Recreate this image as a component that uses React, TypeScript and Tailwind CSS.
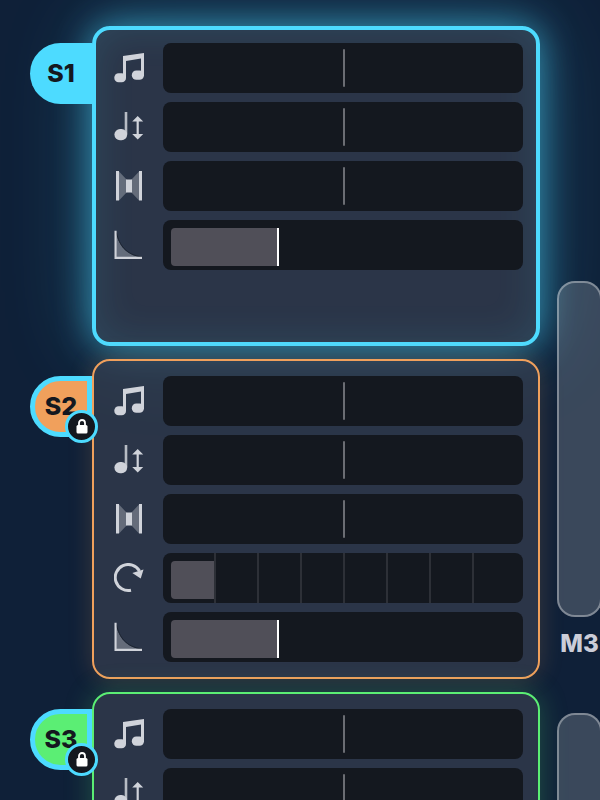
import { useState } from "react";
import type { ReactNode } from "react";

type ParamKind = "pitch" | "fine" | "width" | "repeat" | "decay";

interface Param {
  kind: ParamKind;
  value: number;
}

interface Slot {
  id: string;
  locked: boolean;
  card: string;
  tab: string;
  params: Param[];
}

const slots: Slot[] = [
  {
    id: "S1",
    locked: false,
    card: "border-4 border-[#4ddbff] px-[13px] pt-[13px] shadow-[0_0_36px_rgba(77,219,255,0.6),0_0_90px_rgba(77,219,255,0.24),inset_0_0_40px_rgba(77,219,255,0.12)]",
    tab: "bg-[#4ddbff]",
    params: [
      { kind: "pitch", value: 50 },
      { kind: "fine", value: 50 },
      { kind: "width", value: 50 },
      { kind: "decay", value: 31.5 },
    ],
  },
  {
    id: "S2",
    locked: true,
    card: "border-2 border-[#f0a05c] px-[15px] pt-[15px] shadow-[0_0_24px_rgba(240,160,92,0.2)]",
    tab: "border-[5px] border-[#4ddbff] bg-[#f0a05c]",
    params: [
      { kind: "pitch", value: 50 },
      { kind: "fine", value: 50 },
      { kind: "width", value: 50 },
      { kind: "repeat", value: 12.5 },
      { kind: "decay", value: 31.5 },
    ],
  },
  {
    id: "S3",
    locked: true,
    card: "border-2 border-[#5bee74] px-[15px] pt-[15px] shadow-[0_0_28px_rgba(91,238,116,0.25)]",
    tab: "border-[5px] border-[#4ddbff] bg-[#5bee74]",
    params: [
      { kind: "pitch", value: 50 },
      { kind: "fine", value: 50 },
      { kind: "width", value: 50 },
      { kind: "repeat", value: 12.5 },
      { kind: "decay", value: 31.5 },
    ],
  },
];

const labels: Record<ParamKind, string> = {
  pitch: "Pitch",
  fine: "Fine tune",
  width: "Width",
  repeat: "Repeat",
  decay: "Decay",
};

const icons: Record<ParamKind, ReactNode> = {
  pitch: (
    <>
      <path d="M9 3 30 0V5L12 8V25H9Z" fill="currentColor" />
      <path d="M27 3H30V22H27Z" fill="currentColor" />
      <rect x="0.3" y="20.2" width="11.7" height="9" rx="4.3" fill="currentColor" />
      <rect x="17.8" y="17.4" width="12.2" height="9.4" rx="4.5" fill="currentColor" />
    </>
  ),
  fine: (
    <>
      <path d="M10.7 0H13.3V22H10.7Z" fill="currentColor" opacity="0.85" />
      <rect x="0.4" y="17" width="12.8" height="11.2" rx="5.6" fill="currentColor" />
      <path
        d="M23.7 4 29.2 9.6H24.8V22H29.2L23.7 27.6 18.2 22H22.6V9.6H18.2Z"
        fill="currentColor"
      />
    </>
  ),
  width: (
    <>
      <path d="M5 0.5 12.5 8.5V21.5L5 29.5Z" fill="currentColor" opacity="0.35" />
      <path d="M25 0.5 17.5 8.5V21.5L25 29.5Z" fill="currentColor" opacity="0.35" />
      <rect x="2" y="0" width="3" height="29.5" fill="currentColor" />
      <rect x="25" y="0" width="3" height="29.5" fill="currentColor" />
      <rect x="12" y="8.5" width="6" height="13" fill="currentColor" />
    </>
  ),
  repeat: (
    <>
      <path
        d="M17 27.2A13 13 0 1 1 25.5 8"
        fill="none"
        stroke="currentColor"
        strokeWidth="3"
      />
      <path d="M29.5 6.5 26.7 15.5 18.3 10Z" fill="currentColor" />
    </>
  ),
  decay: (
    <>
      <path d="M2 3C5 15 11 25 28 27.5H2Z" fill="currentColor" opacity="0.35" />
      <path
        d="M2.5 3C5.5 15 11.5 24.5 28 27"
        fill="none"
        stroke="#1c2430"
        strokeWidth="1"
      />
      <path d="M0.5 0.8H2.6V26.8H28V29H0.5Z" fill="currentColor" />
    </>
  ),
};

function LockIcon() {
  return (
    <svg viewBox="0 0 12 15" className="h-[15px] w-3" aria-hidden="true">
      <path
        d="M3 7V4a3 3 0 0 1 6 0V7"
        fill="none"
        stroke="white"
        strokeWidth="1.8"
      />
      <rect x="0.5" y="6" width="11" height="8.5" rx="1.5" fill="white" />
    </svg>
  );
}

function ParamRow({ slotId, param }: { slotId: string; param: Param }) {
  const [value, setValue] = useState(param.value);
  const { kind } = param;
  const bipolar = kind === "pitch" || kind === "fine" || kind === "width";
  const inputId = `${slotId}-${kind}`;

  return (
    <div className="flex items-center">
      <label htmlFor={inputId} className="w-[54px] shrink-0 pl-[5px] text-[#d0d3da]">
        <svg
          viewBox="0 0 30 30"
          className="size-[30px]"
          role="img"
          aria-label={labels[kind]}
        >
          {icons[kind]}
        </svg>
      </label>
      <div className="relative h-[50px] flex-1 overflow-hidden rounded-lg bg-[#14181f] px-2">
        {bipolar ? (
          <div className="relative h-full">
            <div
              className="absolute inset-y-1.5 w-0.5 rounded-full bg-[#6b6d73]"
              style={{ left: `${value}%` }}
            />
          </div>
        ) : (
          <div className="relative h-full">
            <div
              className={`absolute top-2 h-[38px] rounded-l bg-[#504f58] ${
                kind === "decay" ? "border-r-2 border-white" : ""
              }`}
              style={{ width: `${value}%` }}
            />
            {kind === "repeat" && (
              <div className="relative grid h-full grid-cols-8">
                <div />
                {[1, 2, 3, 4, 5, 6, 7].map((step) => (
                  <div key={step} className="border-l-2 border-[#2d3037]" />
                ))}
              </div>
            )}
          </div>
        )}
        <input
          id={inputId}
          type="range"
          min={0}
          max={100}
          step={0.5}
          value={value}
          onChange={(e) => setValue(Number(e.target.value))}
          className="absolute inset-0 size-full cursor-pointer opacity-0"
        />
      </div>
    </div>
  );
}

function SlotRow({ slot }: { slot: Slot }) {
  return (
    <section className="flex items-start">
      <button
        type="button"
        className={`relative z-10 mt-[17px] flex h-[61px] w-[62px] shrink-0 items-center justify-center rounded-l-full text-[25px] font-extrabold text-[#14181f] ${slot.tab}`}
      >
        {slot.id}
        {slot.locked && (
          <span className="absolute -right-[11px] -bottom-[11px] flex size-[33px] items-center justify-center rounded-full border-[3px] border-[#4ddbff] bg-[#14181f]">
            <LockIcon />
          </span>
        )}
      </button>
      <div
        className={`flex min-h-80 flex-1 flex-col gap-[9px] rounded-[18px] bg-[#3e4553]/60 ${slot.card}`}
      >
        {slot.params.map((param) => (
          <ParamRow key={param.kind} slotId={slot.id} param={param} />
        ))}
      </div>
    </section>
  );
}

export default function App() {
  return (
    <div className="h-screen overflow-hidden bg-[#0f2038] font-['Inter',sans-serif]">
      <main className="-mr-0.5 flex gap-[17px] pl-[30px]">
        <div className="flex flex-1 flex-col gap-[13px] pt-[26px]">
          {slots.map((slot) => (
            <SlotRow key={slot.id} slot={slot} />
          ))}
        </div>
        <aside className="relative z-10 w-[45px] shrink-0 pt-[281px]">
          <div className="h-[336px] rounded-[18px] border-2 border-white/35 bg-white/18" />
          <p className="h-24 pt-[11px] text-center text-2xl font-extrabold text-[#cbcdd8]">
            M3
          </p>
          <div className="h-[336px] rounded-[18px] border-2 border-white/35 bg-white/18" />
        </aside>
      </main>
    </div>
  );
}
